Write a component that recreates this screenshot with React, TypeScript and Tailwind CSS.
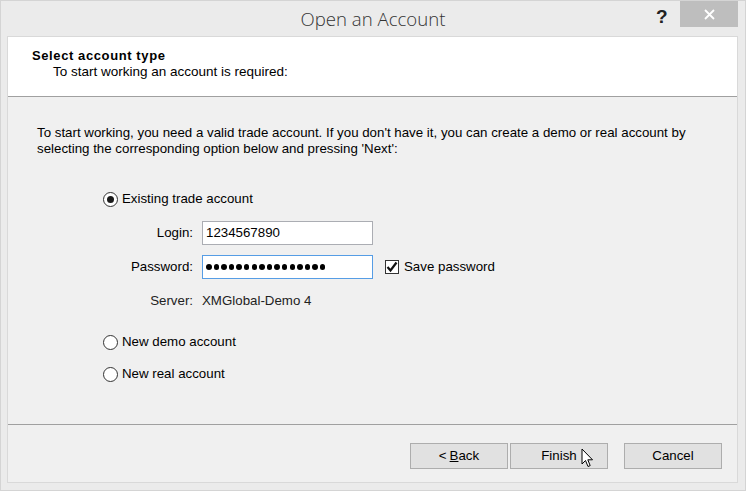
import React from "react";

const font = { fontFamily: '"Liberation Sans", Arial, sans-serif' };

function Radio({ checked, label }: { checked?: boolean; label: string }) {
  return (
    <div className="flex items-center h-[16px]">
      <div className="w-[15px] h-[15px] rounded-full border border-[#333333] bg-white flex items-center justify-center">
        {checked && <div className="w-[7px] h-[7px] rounded-full bg-[#1a1a1a]" />}
      </div>
      <span className="ml-[4px] text-[13.3px] text-black leading-[16px]">{label}</span>
    </div>
  );
}

export default function App() {
  return (
    <div
      className="w-[746px] h-[491px] bg-[#ebebeb] border border-[#d4d4d4] flex flex-col relative overflow-hidden"
      style={font}
    >
      {/* Title bar */}
      <div className="h-[35px] relative flex items-center justify-center shrink-0">
        <span
          className="text-[18.6px] text-[#333333] font-light"
          style={{ fontFamily: '"Open Sans", "Noto Sans", sans-serif' }}
        >
          Open an Account
        </span>
        <span className="absolute left-[655px] top-[2px] text-[19px] font-bold text-[#222222]">?</span>
        <div className="absolute left-[679px] top-0 w-[58px] h-[26px] bg-[#bebebe] flex items-center justify-center">
          <svg width="11" height="11" viewBox="0 0 11 11">
            <path d="M1 1 L10 10 M10 1 L1 10" stroke="white" strokeWidth="1.8" />
          </svg>
        </div>
      </div>

      {/* Client area */}
      <div className="ml-[6px] mr-[7px] h-[447px] border border-[#d9d9d9] flex flex-col bg-[#f0f0f0]">
        {/* Header */}
        <div className="h-[60px] bg-white border-b border-[#a0a0a0] pl-[24px] pt-[11px] shrink-0">
          <div className="text-[13px] font-bold text-black leading-[16px] tracking-[0.6px]">Select account type</div>
          <div className="text-[13.5px] text-black leading-[16px] pl-[21px]">To start working an account is required:</div>
        </div>

        {/* Body */}
        <div className="h-[328px] border-b border-[#a0a0a0] pl-[29px] pt-[28px] shrink-0">
          <p className="text-[13.3px] text-black leading-[16px]">
            To start working, you need a valid trade account. If you don't have it, you can create a demo or real account by
            <br />
            selecting the corresponding option below and pressing 'Next':
          </p>

          <div className="ml-[66px] mt-[34px] flex flex-col">
            <Radio checked label="Existing trade account" />

            <div className="flex items-center mt-[14px] h-[24px]">
              <span className="w-[94px] text-right text-[13.3px] text-black pr-[4px]">Login:</span>
              <div className="ml-[5px] w-[171px] h-[24px] border border-[#abadb3] bg-white flex items-center pl-[3px] text-[13.3px] text-black">
                1234567890
              </div>
            </div>

            <div className="flex items-center mt-[10px] h-[24px]">
              <span className="w-[94px] text-right text-[13.3px] text-black pr-[4px]">Password:</span>
              <div className="ml-[5px] w-[171px] h-[24px] border border-[#569de5] bg-white flex items-center pl-[3px] gap-[2.1px]">
                {Array.from({ length: 16 }).map((_, i) => (
                  <span key={i} className="w-[5.5px] h-[5.5px] rounded-full bg-black inline-block" />
                ))}
              </div>
              <div className="ml-[12px] w-[14px] h-[14px] border border-[#333333] bg-white flex items-center justify-center">
                <svg width="12" height="12" viewBox="0 0 12 12">
                  <path d="M1.5 6 L4.5 9.5 L10.5 1.5" stroke="#111" strokeWidth="2.2" fill="none" />
                </svg>
              </div>
              <span className="ml-[5px] text-[13.3px] text-black">Save password</span>
            </div>

            <div className="flex items-center mt-[10px] h-[24px]">
              <span className="w-[94px] text-right text-[13.3px] text-[#222222] pr-[4px]">Server:</span>
              <span className="ml-[5px] text-[13.3px] text-[#222222]">XMGlobal-Demo 4</span>
            </div>

            <div className="mt-[21px]">
              <Radio label="New demo account" />
            </div>
            <div className="mt-[16px]">
              <Radio label="New real account" />
            </div>
          </div>
        </div>

        {/* Footer */}
        <div className="flex-1 flex items-start pt-[18px] pl-[402px]">
          <div className="w-[98px] h-[26px] bg-[#e1e1e1] border border-[#adadad] flex items-center justify-center text-[13.3px] text-black">
            &lt; <span className="underline ml-[3px]">B</span>ack
          </div>
          <div className="ml-[2px] w-[98px] h-[26px] bg-[#e1e1e1] border border-[#adadad] flex items-center justify-center text-[13.3px] text-black">
            Finish
          </div>
          <div className="ml-[16px] w-[98px] h-[26px] bg-[#e1e1e1] border border-[#adadad] flex items-center justify-center text-[13.3px] text-black">
            Cancel
          </div>
        </div>
      </div>

      {/* Mouse cursor */}
      <svg className="absolute left-[580px] top-[447px]" width="14" height="22" viewBox="0 0 14 22">
        <path
          d="M1 1 L1 16 L4.5 12.5 L7 18.5 L9.2 17.6 L6.8 11.8 L11.5 11.8 Z"
          fill="white"
          stroke="black"
          strokeWidth="1"
          strokeLinejoin="miter"
        />
      </svg>
    </div>
  );
}
